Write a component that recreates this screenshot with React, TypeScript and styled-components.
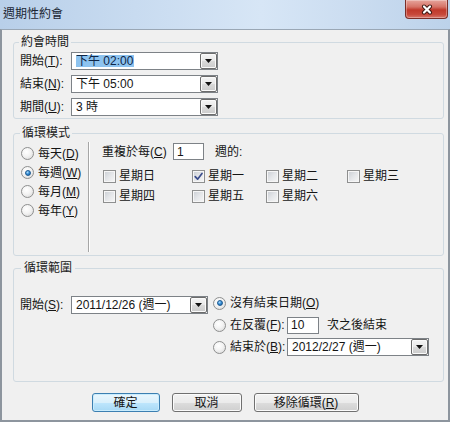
import React from 'react';
import styled, { createGlobalStyle, css } from 'styled-components';

const GlobalStyle = createGlobalStyle`
  html, body { margin: 0; padding: 0; background: #ffffff; }
  body {
    font-family: "Liberation Sans", "Noto Sans CJK TC", sans-serif;
    font-size: 12px;
    line-height: 14px;
    color: #151515;
  }
  *, *::before, *::after { box-sizing: border-box; }
`;

const Window = styled.div`
  width: 450px;
  height: 422px;
  display: flex;
  flex-direction: column;
  overflow: hidden;
`;

const TitleBar = styled.div`
  height: 29px;
  flex: none;
  display: flex;
  justify-content: space-between;
  align-items: flex-start;
  background: linear-gradient(to right, #b8cfe9 0%, #c8dbf0 30%, #d7e6f6 58%, #cadcf0 80%, #bcd2ea 100%);
`;

const Title = styled.div`
  padding: 7px 0 0 3px;
  font-size: 12px;
  line-height: 14px;
  color: #1b2633;
`;

const CloseButton = styled.div`
  width: 43px;
  height: 19px;
  margin-right: 2px;
  display: flex;
  align-items: center;
  justify-content: center;
  border: 1px solid #7a2e28;
  border-top: none;
  border-radius: 0 0 4px 4px;
  background: linear-gradient(to bottom, #e6a59c 0%, #d67367 38%, #c0392b 55%, #c7483a 80%, #d7766b 100%);
  box-shadow: inset 0 0 0 1px rgba(255, 255, 255, 0.3);
`;

const Frame = styled.div`
  flex: 1;
  display: flex;
  flex-direction: column;
  background: #f0f0f0;
  border: 2px solid #8d959e;
  border-top: 1px solid #9aa7b5;
  padding: 5px 4px 0 11px;
`;

const Group = styled.fieldset`
  margin: 0;
  min-width: 0;
  border: 1px solid #d0dae1;
  border-radius: 3px;
`;

const TimeGroup = styled(Group)`
  padding: 3px 0 2px 6px;
`;

const PatternGroup = styled(Group)`
  margin-top: 7px;
  padding: 2px 0 3px 7px;
`;

const RangeGroup = styled(Group)`
  margin-top: 5px;
  padding: 17px 0 23px 6px;
`;

const Legend = styled.legend`
  padding: 0 2px;
  margin-left: -1px;
  font-size: 12px;
  line-height: 14px;
  color: #1a1a1a;
`;

const RangeLegend = styled(Legend)`
  margin-left: 1px;
  padding: 0 3px;
`;

const Key = styled.u`
  text-decoration: underline;
  text-underline-offset: 1px;
`;

const TimeGrid = styled.div`
  display: grid;
  grid-template-columns: 51px 147px;
  grid-auto-rows: 18px;
  row-gap: 5px;
  align-items: center;
`;

const FieldLabel = styled.span<{ $w?: number }>`
  white-space: nowrap;
  ${p => p.$w !== undefined && css`width: ${p.$w}px; flex: none;`}
`;

const Combo = styled.div<{ $w: number }>`
  width: ${p => p.$w}px;
  height: 18px;
  flex: none;
  display: flex;
  align-items: stretch;
  background: #ffffff;
  border: 1px solid #7d8287;
`;

const ComboValue = styled.div`
  flex: 1;
  display: flex;
  align-items: center;
  padding-left: 4px;
  white-space: nowrap;
  overflow: hidden;
`;

const Selected = styled.span`
  background: #8dc3ef;
  color: #0d2547;
  line-height: 12px;
  padding: 0 1px 0 0;
`;

const DropButton = styled.div`
  width: 17px;
  margin: 0;
  display: flex;
  align-items: center;
  justify-content: center;
  border: 1px solid #6c6c6c;
  border-radius: 2px;
  background: linear-gradient(#f5f5f5 0%, #e8e8e8 50%, #dadada 51%, #cbcbcb 100%);
  box-shadow: inset 0 0 0 1px #fafafa;
`;

const PatternBody = styled.div`
  display: flex;
  height: 110px;
`;

const FreqColumn = styled.div`
  width: 67px;
  flex: none;
  padding-top: 2px;
  display: flex;
  flex-direction: column;
`;

const OptionRow = styled.label<{ $h: number }>`
  height: ${p => p.$h}px;
  display: flex;
  align-items: center;
  gap: 4px;
  white-space: nowrap;
`;

const Radio = styled.span<{ $checked?: boolean }>`
  width: 13px;
  height: 13px;
  flex: none;
  border-radius: 50%;
  border: 1px solid #8e8f8f;
  background: radial-gradient(circle at 40% 35%, #ffffff 0%, #f3f3f3 45%, #d4d4d4 100%);
  display: inline-flex;
  align-items: center;
  justify-content: center;
  ${p => p.$checked && css`
    &::after {
      content: '';
      width: 6px;
      height: 6px;
      border-radius: 50%;
      border: 1px solid #1c5a92;
      background: radial-gradient(circle at 35% 30%, #b9e4ff 0%, #3b93dc 45%, #17558f 100%);
    }
  `}
`;

const VSeparator = styled.div`
  width: 2px;
  flex: none;
  border-left: 1px solid #a6a6a6;
  border-right: 1px solid #ffffff;
`;

const WeekColumn = styled.div`
  margin-left: 12px;
  padding-top: 1px;
  display: flex;
  flex-direction: column;
`;

const RepeatRow = styled.div`
  height: 17px;
  display: flex;
  align-items: center;
`;

const TextBox = styled.div<{ $w: number }>`
  width: ${p => p.$w}px;
  height: 17px;
  flex: none;
  display: flex;
  align-items: center;
  padding-left: 3px;
  background: #ffffff;
  border: 1px solid #7d8287;
`;

const Trailing = styled.span<{ $ml: number }>`
  margin-left: ${p => p.$ml}px;
  white-space: nowrap;
`;

const DayGrid = styled.div`
  margin-top: 6px;
  margin-left: 1px;
  display: grid;
  grid-template-columns: 89px 74px 81px auto;
  grid-auto-rows: 20px;
`;

const DayItem = styled.label`
  display: flex;
  align-items: center;
  gap: 3px;
  white-space: nowrap;
`;

const CheckBox = styled.span`
  width: 13px;
  height: 13px;
  flex: none;
  display: inline-flex;
  align-items: center;
  justify-content: center;
  border: 1px solid #8e8f8f;
  background: linear-gradient(135deg, #c9cdd3 0%, #e4e6e9 50%, #f7f7f7 100%);
  box-shadow: inset 0 0 0 1px #f6f6f6;
`;

const RangeBody = styled.div`
  display: flex;
  align-items: flex-start;
`;

const StartBlock = styled.div`
  margin-top: 4px;
  display: flex;
  align-items: center;
`;

const EndOptions = styled.div`
  margin-left: 5px;
  display: flex;
  flex-direction: column;
`;

const ButtonRow = styled.div`
  margin-top: 11px;
  padding-right: 7px;
  display: flex;
  justify-content: center;
  gap: 12px;
`;

const Button = styled.button<{ $w: number; $primary?: boolean }>`
  width: ${p => p.$w}px;
  height: 19px;
  padding: 0;
  font: inherit;
  font-size: 12px;
  line-height: 14px;
  color: #151515;
  border: 1px solid #707070;
  border-radius: 3px;
  background: linear-gradient(#f3f3f3 0%, #ebebeb 50%, #dddddd 51%, #cfcfcf 100%);
  box-shadow: inset 0 0 0 1px #fbfbfb;
  ${p => p.$primary && css`
    border-color: #3c7fb1;
    background: linear-gradient(#eaf6fd 0%, #d9f0fc 50%, #bee6fd 51%, #a7d9f5 100%);
    box-shadow: inset 0 0 0 1px #c9ecfd;
  `}
`;

const Arrow = () => (
  <svg width="7" height="4" viewBox="0 0 7 4">
    <path d="M0 0H7L3.5 4Z" fill="#111" />
  </svg>
);

const Check = () => (
  <svg width="11" height="11" viewBox="0 0 11 11">
    <path d="M2.2 5.6 L4.6 8.2 L9 2.4" fill="none" stroke="#3b4d8c" strokeWidth="1.7" strokeLinecap="round" strokeLinejoin="round" />
  </svg>
);

const CloseIcon = () => (
  <svg width="12" height="11" viewBox="0 0 12 11">
    <path d="M3 2.5 L9 8.5 M9 2.5 L3 8.5" stroke="#3a1611" strokeWidth="4" strokeLinecap="round" />
    <path d="M3 2.5 L9 8.5 M9 2.5 L3 8.5" stroke="#ffffff" strokeWidth="2.2" strokeLinecap="round" />
  </svg>
);

const ComboBox = ({ w, children }: { w: number; children: React.ReactNode }) => (
  <Combo $w={w}>
    <ComboValue>{children}</ComboValue>
    <DropButton><Arrow /></DropButton>
  </Combo>
);

const freq = [
  { t: '每天', k: 'D' },
  { t: '每週', k: 'W', on: true },
  { t: '每月', k: 'M' },
  { t: '每年', k: 'Y' },
];

const days = [
  { t: '星期日' },
  { t: '星期一', on: true },
  { t: '星期二' },
  { t: '星期三' },
  { t: '星期四' },
  { t: '星期五' },
  { t: '星期六' },
];

export default function App() {
  return (
    <>
      <GlobalStyle />
      <Window>
        <TitleBar>
          <Title>週期性約會</Title>
          <CloseButton><CloseIcon /></CloseButton>
        </TitleBar>
        <Frame>
          <TimeGroup>
            <Legend>約會時間</Legend>
            <TimeGrid>
              <FieldLabel>開始(<Key>T</Key>):</FieldLabel>
              <ComboBox w={147}><Selected>下午 02:00</Selected></ComboBox>
              <FieldLabel>結束(<Key>N</Key>):</FieldLabel>
              <ComboBox w={147}>下午 05:00</ComboBox>
              <FieldLabel>期間(<Key>U</Key>):</FieldLabel>
              <ComboBox w={147}>3 時</ComboBox>
            </TimeGrid>
          </TimeGroup>

          <PatternGroup>
            <Legend>循環模式</Legend>
            <PatternBody>
              <FreqColumn>
                {freq.map(f => (
                  <OptionRow key={f.k} $h={19}>
                    <Radio $checked={f.on} />
                    <span>{f.t}(<Key>{f.k}</Key>)</span>
                  </OptionRow>
                ))}
              </FreqColumn>
              <VSeparator />
              <WeekColumn>
                <RepeatRow>
                  <FieldLabel $w={71}>重複於每(<Key>C</Key>)</FieldLabel>
                  <TextBox $w={31}>1</TextBox>
                  <Trailing $ml={11}>週的:</Trailing>
                </RepeatRow>
                <DayGrid>
                  {days.map(d => (
                    <DayItem key={d.t}>
                      <CheckBox>{d.on && <Check />}</CheckBox>
                      <span>{d.t}</span>
                    </DayItem>
                  ))}
                </DayGrid>
              </WeekColumn>
            </PatternBody>
          </PatternGroup>

          <RangeGroup>
            <RangeLegend>循環範圍</RangeLegend>
            <RangeBody>
              <StartBlock>
                <FieldLabel $w={51}>開始(<Key>S</Key>):</FieldLabel>
                <ComboBox w={137}>2011/12/26 (週一)</ComboBox>
              </StartBlock>
              <EndOptions>
                <OptionRow $h={22}>
                  <Radio $checked />
                  <span>沒有結束日期(<Key>O</Key>)</span>
                </OptionRow>
                <OptionRow $h={22}>
                  <Radio />
                  <FieldLabel $w={53}>在反覆(<Key>F</Key>):</FieldLabel>
                  <TextBox $w={32}>10</TextBox>
                  <Trailing $ml={4}>次之後結束</Trailing>
                </OptionRow>
                <OptionRow $h={22}>
                  <Radio />
                  <FieldLabel $w={53}>結束於(<Key>B</Key>):</FieldLabel>
                  <ComboBox w={142}>2012/2/27 (週一)</ComboBox>
                </OptionRow>
              </EndOptions>
            </RangeBody>
          </RangeGroup>

          <ButtonRow>
            <Button $w={68} $primary>確定</Button>
            <Button $w={70}>取消</Button>
            <Button $w={105}>移除循環(<Key>R</Key>)</Button>
          </ButtonRow>
        </Frame>
      </Window>
    </>
  );
}
